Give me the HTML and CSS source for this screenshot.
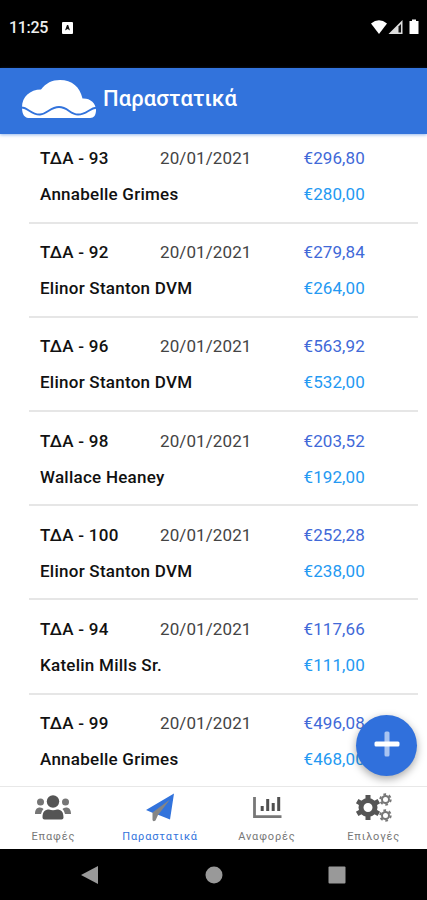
FILE: index.html
```html
<!DOCTYPE html>
<html lang="el">
<head>
  <meta charset="utf-8">
  <title>Παραστατικά</title>
  <link rel="stylesheet" href="styles.css">
</head>
<body>

  <div class="statusbar">
    <span class="clock">11:25</span>
    <svg class="notif" width="11" height="12" viewBox="0 0 11 12"><rect width="11" height="12" rx="1" fill="#fff"/><path d="M3 8.500L5 3H6.200L8 8.500L5.600 7z" fill="#111"/></svg>
    <svg class="signals" width="50" height="16" viewBox="0 0 50 16">
      <path d="M0 4.500Q8 -2 16 4.500L8 15z" fill="#fff"/>
      <path d="M17.500 15L31.500 1V15z" fill="#ddd"/>
      <path d="M27.500 7.500L30 5V13.500H27.500z" fill="#111"/>
      <path d="M38.500 2H41V.5h4V2h2.500v13h-9z" fill="#fff"/>
    </svg>
  </div>

  <header class="header">
    <svg class="logo" width="76" height="42" viewBox="0 0 76 42">
      <path d="M7 39C2 38 1 33 1 28C1 18 9 10.500 20 10.500C25 4 31 1 39 1C51 1 59 8 61.500 19.500C69 19 75 24 75 31C75 36 73 39 69 39z" fill="#fff"/>
      <path d="M0 28.500C7 28 10 36 19 35.500C27 35 29 28 38 28C47 28 49 35.500 57 35.500C66 35.500 68 29 76 28.500" fill="none" stroke="#3273dc" stroke-width="1.800"/>
    </svg>
    <h1>Παραστατικά</h1>
  </header>

  <main class="list" id="list"></main>

  <button class="fab">
    <svg width="26" height="26" viewBox="0 0 26 26"><rect x="10.500" y="0.500" width="5" height="25" rx="1.500" fill="#a9c4f1"/><rect x="0.500" y="10.500" width="25" height="5" rx="1.500" fill="#fff"/></svg>
  </button>

  <nav class="tabs">
    <a class="tab">
      <svg width="38" height="30" viewBox="0 0 38 30">
        <g fill="#757575">
          <circle cx="6.500" cy="9" r="3.500"/><circle cx="31.500" cy="9" r="3.500"/>
          <path d="M1 21C1 16.500 3 14.500 6 14.500Q8.500 14.500 9.500 16Q7.500 18 7 21zM37 21C37 16.500 35 14.500 32 14.500Q29.500 14.500 28.500 16Q30.500 18 31 21z"/>
        </g>
        <g fill="#555">
          <circle cx="19" cy="8.500" r="6.200"/>
          <path d="M8.500 24.500C8.500 18.500 11 16.500 15 16.500Q19 18 23 16.500C27 16.500 29.500 18.500 29.500 24.500Q29.500 26.500 27.500 26.500H10.500Q8.500 26.500 8.500 24.500z"/>
        </g>
      </svg>
      <span>Επαφές</span>
    </a>
    <a class="tab active">
      <svg width="30" height="30" viewBox="0 0 30 30">
        <path d="M29 .5L25 26.500 15 22.500 8 20 1 17z" fill="#3273dc"/>
        <path d="M7.500 19.500L25 6.500 13 22 10.500 27.500Q8 29 7.500 27z" fill="#858585"/>
      </svg>
      <span>Παραστατικά</span>
    </a>
    <a class="tab">
      <svg width="30" height="30" viewBox="0 0 30 30">
        <path d="M2.500 4V23.700H29.500" fill="none" stroke="#777" stroke-width="2.800"/>
        <path d="M10.200 18V13M15.700 18V6M21.200 18V10M26.700 18V4" fill="none" stroke="#505050" stroke-width="3"/>
      </svg>
      <span>Αναφορές</span>
    </a>
    <a class="tab">
      <svg width="38" height="30" viewBox="0 0 38 30">
        <g fill="none" stroke="#555">
          <circle cx="13" cy="14.500" r="7" stroke-width="5"/>
          <path d="M13 2V6M13 23V27M2.200 8.200L5.600 10.200M20.400 18.800L23.800 20.800M2.200 20.800L5.600 18.800M20.400 10.200L23.800 8.200" stroke-width="5"/>
        </g>
        <g fill="none" stroke="#777">
          <circle cx="30.500" cy="6.500" r="3.500" stroke-width="2"/>
          <circle cx="30.500" cy="6.500" r="5.200" stroke-width="2" stroke-dasharray="2.700 2.745"/>
          <circle cx="30.500" cy="22.500" r="3.500" stroke-width="2"/>
          <circle cx="30.500" cy="22.500" r="5.200" stroke-width="2" stroke-dasharray="2.700 2.745"/>
        </g>
      </svg>
      <span>Επιλογές</span>
    </a>
  </nav>

  <div class="navbar">
    <svg width="18" height="20" viewBox="0 0 18 20"><path d="M0 10L17 1V19z" fill="#999"/></svg>
    <svg width="18" height="18" viewBox="0 0 18 18"><circle cx="9" cy="9" r="8.500" fill="#999"/></svg>
    <svg width="18" height="18" viewBox="0 0 18 18"><rect x=".5" y=".5" width="17" height="17" rx="1" fill="#999"/></svg>
  </div>

  <script>
    const docs = [
      [93, "Annabelle Grimes", "296,80", "280,00"],
      [92, "Elinor Stanton DVM", "279,84", "264,00"],
      [96, "Elinor Stanton DVM", "563,92", "532,00"],
      [98, "Wallace Heaney", "203,52", "192,00"],
      [100, "Elinor Stanton DVM", "252,28", "238,00"],
      [94, "Katelin Mills Sr.", "117,66", "111,00"],
      [99, "Annabelle Grimes", "496,08", "468,00"]
    ];

    document.getElementById("list").innerHTML = docs.map(([no, name, total, net]) => `
      <div class="row">
        <span class="code">ΤΔΑ - ${no}</span>
        <span class="date">20/01/2021</span>
        <span class="total">€${total}</span>
        <span class="name">${name}</span>
        <span class="net">€${net}</span>
      </div>`).join("");
  </script>

</body>
</html>
```
FILE: styles.css
```css
* {
  box-sizing: border-box;
}

body {
  margin: 0;
  height: 900px;
  display: flex;
  flex-direction: column;
  overflow: hidden;
  position: relative;
  font-family: Roboto, "Noto Sans", sans-serif;
  background-color: #fff;
}

.statusbar {
  flex: none;
  height: 68px;
  padding: 0 7px 13px 9px;
  display: flex;
  align-items: center;
  background-color: #000;
  color: #eee;
}

.clock {
  width: 53px;
  font-size: 16px;
  font-weight: 500;
  letter-spacing: -0.3px;
}

.signals {
  margin-left: auto;
  margin-right: -1px;
  margin-bottom: 2px;
}

.header {
  flex: none;
  height: 66px;
  padding-left: 21px;
  display: flex;
  align-items: center;
  background-color: #3273dc;
  color: #fff;
  box-shadow: 0 1px 3px rgba(50, 115, 220, 0.5);
  z-index: 1;
}

.logo {
  margin-bottom: 2px;
}

.header h1 {
  margin: 0 0 5px 6px;
  font-size: 22px;
  font-weight: 500;
  letter-spacing: 0.1px;
}

.list {
  flex: 1;
  min-height: 0;
  overflow: hidden;
  margin: 0 9px 0 29px;
}

.row {
  height: 94.2px;
  padding: 10.5px 0 0 11px;
  display: grid;
  grid-template-columns: 120px 143.5px 1fr;
  grid-template-rows: 36px 36px;
  align-items: center;
  border-bottom: 2px solid #e6e6e6;
  font-size: 17px;
  letter-spacing: 0.1px;
  white-space: nowrap;
}

.row:first-child {
  height: 89.7px;
  padding-top: 5.5px;
}

.code,
.name {
  font-weight: 500;
  letter-spacing: 0.25px;
  color: #111;
}

.name {
  grid-column: 1 / 3;
}

.date {
  color: #444;
}

.total {
  color: #4169d8;
}

.net {
  color: #2499f2;
}

.fab {
  position: absolute;
  left: 356px;
  top: 715px;
  width: 61px;
  height: 61px;
  padding: 0;
  border: none;
  border-radius: 50%;
  display: flex;
  align-items: center;
  justify-content: center;
  background-color: #3070dc;
  box-shadow: 0 3px 8px rgba(0, 0, 0, 0.35);
}

.fab svg {
  margin-bottom: 3px;
}

.tabs {
  flex: none;
  height: 63px;
  display: flex;
  border-top: 1px solid #e8e8e8;
  background-color: #fff;
}

.tab {
  flex: 1;
  padding-top: 6px;
  display: flex;
  flex-direction: column;
  align-items: center;
  font-size: 11px;
  letter-spacing: 0.85px;
  color: #777;
}

.tab span {
  margin-top: 7px;
}

.tab.active {
  color: #3273dc;
}

.navbar {
  flex: none;
  height: 51px;
  padding: 0 81px;
  display: flex;
  align-items: center;
  justify-content: space-between;
  background-color: #000;
}
```
